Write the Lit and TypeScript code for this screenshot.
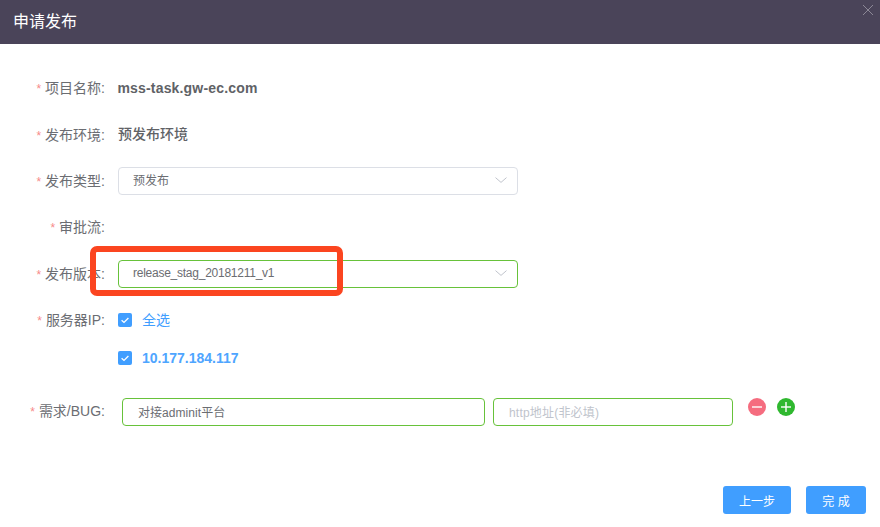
import { LitElement, html, css, svg } from "lit";
import { customElement } from "lit/decorators.js";

const chevron = html`<svg class="chev" width="12" height="6" viewBox="0 0 12 6"><path d="M.5.6 6 5.4 11.5.6" fill="none" stroke="#c0c4cc" stroke-width="1"/></svg>`;
const check = html`<svg width="14" height="14" viewBox="0 0 14 14"><rect width="14" height="14" rx="2" fill="#409eff"/><path d="M3.6 7.2 6 9.4 10.4 5" fill="none" stroke="#fff" stroke-width="1.3"/></svg>`;
const round = (bg: string, plus: boolean) => html`<svg width="18" height="18" viewBox="0 0 18 18"><circle cx="9" cy="9" r="9" fill="${bg}"/><path d="M4 9H14" stroke="#fff" stroke-width="1.4"/>${plus ? svg`<path d="M9 4V14" stroke="#fff" stroke-width="1.4"/>` : ""}</svg>`;

@customElement("app-root")
export class AppRoot extends LitElement {
  static styles = css`
    :host { display: block; width: 880px; height: 527px; position: relative; overflow: hidden; background: #fff;
      font-family: "Liberation Sans", "Noto Sans CJK SC", sans-serif; font-size: 14px; color: #6b6d72; }
    .head { height: 44px; background: #4a4459; color: #fff; font-size: 16px; display: flex; align-items: center; padding: 0 13px 4px; box-sizing: border-box; position: relative; }
    .close { position: absolute; right: 6px; top: 4px; }
    .form { display: flex; flex-direction: column; padding-top: 21px; }
    .row { display: flex; align-items: center; height: 46.4px; }
    .label { width: 105px; flex: none; text-align: right; white-space: nowrap; padding-bottom: 2px; box-sizing: border-box; }
    .label i { color: #f78989; font-style: normal; margin-right: 4px; font-size: 12px; }
    .ctl { margin-left: 13px; display: flex; align-items: center; gap: 10px; }
    .val { font-weight: 700; color: #606266; margin-left: 12.5px; letter-spacing: .17px; }
    .cn { padding-bottom: 3px; letter-spacing: 0; margin-left: 13px; font-weight: 500; }
    .field { height: 28px; box-sizing: border-box; border: 1px solid #dcdfe6; border-radius: 4px; font-size: 12px; padding: 0 14px 2px; display: flex; align-items: center; justify-content: space-between; color: #6b6d72; }
    .sel { width: 400px; }
    .ok { border-color: #67c23a; }
    .chev { margin-right: -4px; }
    .rel { letter-spacing: -.25px; }
    .blue { color: #409eff; padding-bottom: 3px; }
    .ipv { font-weight: 700; color: #4ea5ff; padding-bottom: 1px; }
    .ips { height: 30px; }
    .need { margin-top: 25px; height: 28px; }
    .need .label { padding-bottom: 4px; }
    .need .ctl { margin-left: 17px; gap: 8px; align-self: flex-start; }
    .a { width: 363px; padding-left: 15px; letter-spacing: .05px; }
    .b { width: 240px; color: #c0c4cc; padding-left: 15px; letter-spacing: .2px; }
    .icons { display: flex; gap: 11px; margin-left: 15px; align-self: flex-start; }
    .foot { position: absolute; right: 14px; bottom: 13px; display: flex; gap: 15px; }
    .btn { height: 28px; background: #409eff; color: #fff; border-radius: 3px; font-size: 12px; display: flex; align-items: center; justify-content: center; }
    .prev { width: 68px; } .done { width: 60px; }
    .mark { position: absolute; left: 90px; top: 246px; width: 253px; height: 50px; box-sizing: border-box; border: 6px solid #fb4520; border-radius: 7px; }
  `;
  render() {
    return html`
      <div class="head">申请发布
        <svg class="close" width="12" height="12" viewBox="0 0 12 12"><path d="M1 1 11 11M11 1 1 11" stroke="#8c8896" stroke-width="1"/></svg>
      </div>
      <div class="form">
        <div class="row"><div class="label"><i>*</i>项目名称:</div><div class="val">mss-task.gw-ec.com</div></div>
        <div class="row"><div class="label"><i>*</i>发布环境:</div><div class="val cn">预发布环境</div></div>
        <div class="row"><div class="label"><i>*</i>发布类型:</div><div class="ctl"><div class="field sel">预发布${chevron}</div></div></div>
        <div class="row"><div class="label"><i>*</i>审批流:</div></div>
        <div class="row"><div class="label"><i>*</i>发布版本:</div><div class="ctl"><div class="field sel ok"><span class="rel">release_stag_20181211_v1</span>${chevron}</div></div></div>
        <div class="row"><div class="label"><i>*</i>服务器IP:</div><div class="ctl">${check}<span class="blue">全选</span></div></div>
        <div class="row ips"><div class="label"></div><div class="ctl">${check}<span class="blue ipv">10.177.184.117</span></div></div>
        <div class="row need"><div class="label"><i>*</i>需求/BUG:</div><div class="ctl"><div class="field a ok">对接adminit平台</div><div class="field b ok">http地址(非必填)</div></div>
          <div class="icons">${round("#f56c7f", false)}${round("#2fb82f", true)}</div></div>
      </div>
      <div class="foot"><div class="btn prev">上一步</div><div class="btn done">完 成</div></div>
      <div class="mark"></div>
    `;
  }
}
